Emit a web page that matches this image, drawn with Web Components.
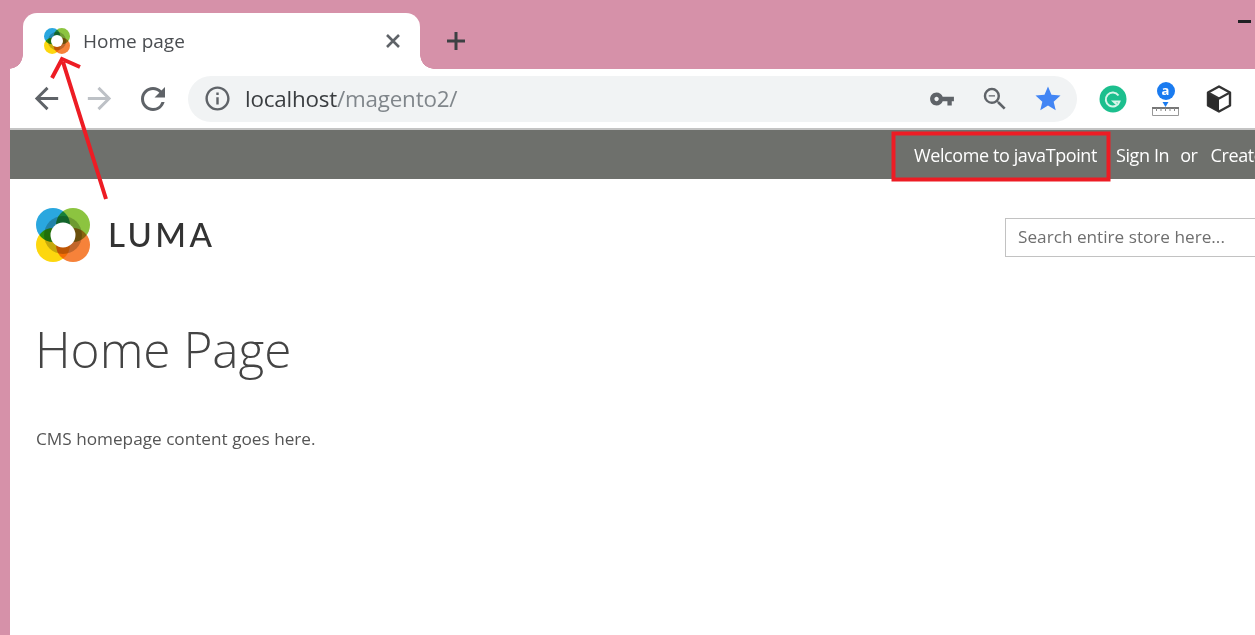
<!DOCTYPE html>
<html lang="en">
<head>
<meta charset="utf-8">
<title>Home page</title>
<style>
  html, body { margin: 0; height: 100%; overflow: hidden; background: #d691a9; }
  /* the reference is a soft, upscaled screenshot */
  body { filter: blur(0.45px); font-family: "Open Sans", sans-serif; position: relative; }
</style>
</head>
<body>
<browser-tabstrip></browser-tabstrip>
<browser-toolbar></browser-toolbar>
<store-page></store-page>
<red-marks></red-marks>

<script>
class LumaLogo extends HTMLElement {
  constructor () {
    super()
    this.shadow = this.attachShadow({ mode: 'open' })
  }

  connectedCallback () {
    this.shadow.innerHTML = `
      <style>
        :host { display: block; width: var(--logo-size, 54px); height: var(--logo-size, 54px); }
        svg { display: block; width: 100%; height: 100%; }
        .leaves { isolation: isolate; }
        circle.leaf { mix-blend-mode: multiply; }
      </style>
      <svg viewBox="0 0 54 54">
        <g class="leaves">
          <circle class="leaf" cx="17" cy="17" r="17" fill="#2aa7df"/>
          <circle class="leaf" cx="37" cy="17" r="17" fill="#8cc440"/>
          <circle class="leaf" cx="17" cy="37" r="17" fill="#fdd70e"/>
          <circle class="leaf" cx="37" cy="37" r="17" fill="#f6823a"/>
          <circle class="leaf" cx="27" cy="27" r="19" fill="#c8c8c2"/>
        </g>
        <circle cx="27" cy="27" r="12.500" fill="#fff"/>
      </svg>
    `
  }
}

class BrowserTab extends HTMLElement {
  constructor () {
    super()
    this.shadow = this.attachShadow({ mode: 'open' })
  }

  connectedCallback () {
    this.shadow.innerHTML = `
      <style>
        :host {
          --logo-size: 26px;
          align-items: center;
          background: #fff;
          border-radius: 14px 14px 0 0;
          box-sizing: border-box;
          color: #4a4d51;
          display: flex;
          font-family: "Open Sans", sans-serif;
          font-size: 19px;
          height: 56px;
          padding: 0 19px 0 21px;
          position: relative;
          width: 397px;
        }
        :host::before, :host::after {
          bottom: 0;
          content: "";
          height: 14px;
          position: absolute;
          width: 14px;
        }
        :host::before { background: radial-gradient(circle at 0 0, transparent 13.5px, #fff 14px); left: -14px; }
        :host::after { background: radial-gradient(circle at 100% 0, transparent 13.5px, #fff 14px); right: -14px; }
        .title { flex: 1; margin-left: 13px; padding-bottom: 1px; }
        svg { display: block; }
      </style>
      <luma-logo></luma-logo>
      <span class="title"><slot></slot></span>
      <svg width="16" height="16" viewBox="0 0 16 16"><path d="M2 2l12 12M14 2L2 14" stroke="#5f6368" stroke-width="2.600" fill="none"/></svg>
    `
  }
}

class BrowserTabstrip extends HTMLElement {
  constructor () {
    super()
    this.shadow = this.attachShadow({ mode: 'open' })
  }

  connectedCallback () {
    this.shadow.innerHTML = `
      <style>
        :host {
          align-items: flex-end;
          box-sizing: border-box;
          display: flex;
          height: 69px;
          padding-left: 23px;
        }
        .plus { align-self: flex-start; margin: 30px 0 0 25px; }
        .min {
          align-self: flex-start;
          background: #202124;
          height: 3px;
          margin: 20px 4px 0 auto;
          width: 13px;
        }
        svg { display: block; }
      </style>
      <browser-tab>Home page</browser-tab>
      <svg class="plus" width="22" height="22" viewBox="0 0 22 22"><path d="M11 2v18M2 11h18" stroke="#3c4043" stroke-width="3" fill="none"/></svg>
      <div class="min"></div>
    `
  }
}

class BrowserToolbar extends HTMLElement {
  constructor () {
    super()
    this.shadow = this.attachShadow({ mode: 'open' })
  }

  connectedCallback () {
    this.shadow.innerHTML = `
      <style>
        :host {
          align-items: center;
          background: #fff;
          border-bottom: 2px solid #c4c4c4;
          box-sizing: border-box;
          display: flex;
          height: 61px;
          margin-left: 10px;
          padding: 0 0 0 10px;
        }
        .btn { align-items: center; display: flex; flex: none; justify-content: center; width: 53px; }
        svg { display: block; }
        .omni {
          align-items: center;
          background: #f1f3f4;
          border-radius: 23px;
          box-sizing: border-box;
          display: flex;
          flex: none;
          height: 46px;
          margin: 0 9px;
          padding: 0 3px 0 15px;
          width: 889px;
        }
        .url {
          color: #80868b;
          flex: 1;
          font-family: "Open Sans", sans-serif;
          font-size: 22.4px;
          letter-spacing: -0.2px;
          margin-left: 13px;
        }
        .url b { color: #3a3d40; font-weight: 400; }
        .a {
          background: #1a7bf0;
          border-radius: 50%;
          color: #fff;
          font: 700 13px "Open Sans", sans-serif;
          height: 18px;
          left: 17.5px;
          line-height: 16px;
          position: absolute;
          text-align: center;
          top: 0;
          width: 18px;
        }
        .amz { height: 34px; position: relative; width: 53px; }
        .amz svg { bottom: 0; left: 13px; position: absolute; }
      </style>
      <div class="btn"><svg width="35" height="35" viewBox="0 0 24 24"><path fill="#5f6368" d="M20 11H7.830l5.590-5.590L12 4l-8 8 8 8 1.410-1.410L7.830 13H20v-2z"/></svg></div>
      <div class="btn"><svg width="35" height="35" viewBox="0 0 24 24"><path fill="#bdc1c6" d="M4 11h12.170l-5.590-5.590L12 4l8 8-8 8-1.410-1.410L16.170 13H4v-2z"/></svg></div>
      <div class="btn"><svg width="36" height="36" viewBox="0 0 24 24"><path fill="#5f6368" d="M17.650 6.350A7.958 7.958 0 0012 4c-4.420 0-7.990 3.580-7.990 8s3.570 8 7.990 8c3.730 0 6.840-2.550 7.730-6h-2.080A5.990 5.990 0 0112 18c-3.310 0-6-2.690-6-6s2.690-6 6-6c1.660 0 3.140.690 4.220 1.780L13 11h7V4l-2.350 2.350z"/></svg></div>
      <div class="omni">
        <svg width="29" height="29" viewBox="0 0 24 24"><path fill="#5f6368" d="M11 7h2v2h-2zm0 4h2v6h-2zm1-9C6.480 2 2 6.480 2 12s4.480 10 10 10 10-4.480 10-10S17.520 2 12 2zm0 18c-4.410 0-8-3.590-8-8s3.590-8 8-8 8 3.590 8 8-3.590 8-8 8z"/></svg>
        <span class="url"><b>localhost</b>/magento2/</span>
        <div class="btn"><svg width="26" height="26" viewBox="0 0 24 24"><path fill="#5f6368" d="M12.650 10C11.830 7.670 9.610 6 7 6c-3.310 0-6 2.690-6 6s2.690 6 6 6c2.610 0 4.830-1.670 5.650-4H17v4h4v-4h2v-4H12.650zM7 14c-1.100 0-2-.9-2-2s.9-2 2-2 2 .9 2 2-.9 2-2 2z"/></svg></div>
        <div class="btn"><svg width="30" height="30" viewBox="0 0 24 24"><path fill="#5f6368" d="M15.500 14h-.790l-.280-.270A6.471 6.471 0 0016 9.500 6.500 6.500 0 109.500 16c1.610 0 3.090-.590 4.230-1.570l.270.280v.790l5 4.990L20.490 19l-4.990-5zm-6 0C7.010 14 5 11.990 5 9.500S7.010 5 9.500 5 14 7.010 14 9.500 11.990 14 9.500 14zM7 9h5v1H7z"/></svg></div>
        <div class="btn"><svg width="30" height="30" viewBox="0 0 24 24"><path fill="#4285f4" d="M12 17.270L18.180 21l-1.640-6.880L22 9.240l-7.190-.610L12 2 9.190 8.630 2 9.240l5.460 4.880L5.820 21z"/></svg></div>
      </div>
      <div class="btn">
        <svg width="28" height="28" viewBox="0 0 28 28"><circle cx="14" cy="14" r="13.500" fill="#1cbf8e"/><path d="M19.500 10.500A7 7 0 1 0 20.500 16.500h-6l3 2.800" fill="none" stroke="#d8f5ea" stroke-width="2"/></svg>
      </div>
      <div class="btn amz">
        <div class="a">a</div>
        <svg width="27" height="14" viewBox="0 0 27 14"><path d="M.5 5.500h26v8H.5z" fill="#fff" stroke="#999"/><path d="M0 6h27" stroke="#777" stroke-width="2"/><path d="M4.500 6v3M9 6v3M13.500 6v3M18 6v3M22.500 6v3" fill="none" stroke="#888"/><path d="M13.500 5L10.500 0h6z" fill="#1a7bf0"/></svg>
      </div>
      <div class="btn">
        <svg width="26" height="28" viewBox="0 0 26 28"><path d="M13 1.500L24 7.500v13L13 26.500 2 20.500v-13z" fill="#fff" stroke="#333" stroke-width="2.400" stroke-linejoin="round"/><path d="M2 7.500L13 13.500V26.500L2 20.500z" fill="#2b2b2b"/><path d="M2 7.500L13 13.500 24 7.500" fill="none" stroke="#333" stroke-width="2"/></svg>
      </div>
    `
  }
}

class StoreTopbar extends HTMLElement {
  constructor () {
    super()
    this.shadow = this.attachShadow({ mode: 'open' })
  }

  connectedCallback () {
    this.shadow.innerHTML = `
      <style>
        :host {
          align-items: center;
          background: #6e706c;
          box-sizing: border-box;
          color: #fff;
          display: flex;
          font-family: "Open Sans", sans-serif;
          font-size: 18px;
          height: 49px;
          letter-spacing: -0.4px;
          overflow: hidden;
          padding-left: 904px;
          white-space: nowrap;
        }
        span { flex: none; }
        .signin { margin-left: 19px; }
        .or { margin-left: 11px; }
        .create { margin-left: 13px; }
      </style>
      <span>Welcome to javaTpoint</span>
      <span class="signin">Sign In</span>
      <span class="or">or</span>
      <span class="create">Create an Account</span>
    `
  }
}

class StoreHeader extends HTMLElement {
  constructor () {
    super()
    this.shadow = this.attachShadow({ mode: 'open' })
  }

  connectedCallback () {
    this.shadow.innerHTML = `
      <style>
        :host {
          align-items: flex-start;
          display: flex;
          height: 120px;
          overflow: hidden;
          padding-left: 26px;
        }
        .brand { align-items: center; display: flex; gap: 18px; margin-top: 29px; }
        .word {
          color: #333;
          font-family: Lato, sans-serif;
          font-size: 33px;
          font-weight: 500;
          letter-spacing: 3.4px;
          line-height: 1;
          margin-top: -2px;
        }
        .search {
          border: 1px solid #c2c2c2;
          box-sizing: border-box;
          color: #6f6f6f;
          flex: none;
          font-family: "Open Sans", sans-serif;
          font-size: 17.2px;
          height: 39px;
          line-height: 36px;
          margin: 39px -40px 0 auto;
          padding-left: 12px;
          width: 290px;
        }
      </style>
      <div class="brand">
        <luma-logo></luma-logo>
        <span class="word">LUMA</span>
      </div>
      <div class="search">Search entire store here...</div>
    `
  }
}

class PageContent extends HTMLElement {
  constructor () {
    super()
    this.shadow = this.attachShadow({ mode: 'open' })
  }

  connectedCallback () {
    this.shadow.innerHTML = `
      <style>
        :host { color: #444; display: block; font-family: "Open Sans", sans-serif; padding-left: 26px; }
        h1 { font-size: 49.5px; font-weight: 300; line-height: 60px; margin: 20px 0 0 -1px; }
        p { color: #555; font-size: 17.2px; line-height: 22px; margin: 49px 0 0; }
      </style>
      <h1>Home Page</h1>
      <p>CMS homepage content goes here.</p>
    `
  }
}

class StorePage extends HTMLElement {
  constructor () {
    super()
    this.shadow = this.attachShadow({ mode: 'open' })
  }

  connectedCallback () {
    this.shadow.innerHTML = `
      <style>
        :host { background: #fff; display: block; height: 505px; margin-left: 10px; overflow: hidden; }
      </style>
      <store-topbar></store-topbar>
      <store-header></store-header>
      <page-content></page-content>
    `
  }
}

// the red marks someone drew over the screenshot
class RedMarks extends HTMLElement {
  constructor () {
    super()
    this.shadow = this.attachShadow({ mode: 'open' })
  }

  connectedCallback () {
    this.shadow.innerHTML = `
      <style>
        :host { display: block; height: 635px; left: 0; pointer-events: none; position: absolute; top: 0; width: 1255px; }
        svg { display: block; }
      </style>
      <svg width="1255" height="635" viewBox="0 0 1255 635">
        <path d="M106 199L63 62M52 78L62 59 80 67" fill="none" stroke="#ed1c24" stroke-width="4"/>
        <rect x="893.500" y="133.500" width="215" height="46" fill="none" stroke="#ed1c24" stroke-width="4"/>
      </svg>
    `
  }
}

customElements.define('luma-logo', LumaLogo)
customElements.define('browser-tab', BrowserTab)
customElements.define('browser-tabstrip', BrowserTabstrip)
customElements.define('browser-toolbar', BrowserToolbar)
customElements.define('store-topbar', StoreTopbar)
customElements.define('store-header', StoreHeader)
customElements.define('page-content', PageContent)
customElements.define('store-page', StorePage)
customElements.define('red-marks', RedMarks)
</script>
</body>
</html>
